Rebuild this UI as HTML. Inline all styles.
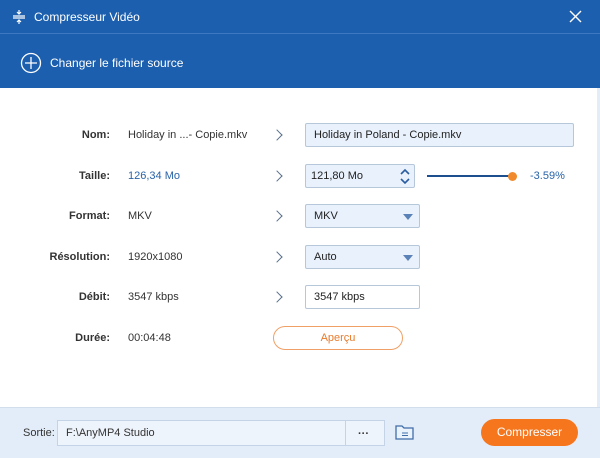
<!DOCTYPE html><html><head><style>
body{margin:0;width:600px;height:457px;overflow:hidden;font-family:"Liberation Sans",sans-serif;font-size:11px;color:#333;background:#fff;position:relative}
.a{position:absolute}
.lab{position:absolute;right:490px;font-weight:bold;color:#333;font-size:11px}
.val{position:absolute;left:128px}
.arr{position:absolute;left:273px;width:7px;height:7px;border-top:1.3px solid #5a6f8a;border-right:1.3px solid #5a6f8a;transform:rotate(45deg)}
.inp{position:absolute;left:305px;background:#e8f1fc;border:1px solid #b7c7da;border-radius:2px;box-sizing:border-box;height:24px;line-height:22px;padding-left:8px;color:#222}
.dd{position:absolute;right:6px;top:9px;border-left:5px solid transparent;border-right:5px solid transparent;border-top:6px solid #5b82b8}
</style></head><body>
<div class="a" style="left:0;top:0;width:600px;height:33px;background:#1c5fae"></div>
<div class="a" style="left:0;top:33px;width:600px;height:1px;background:#3d78c0"></div>
<div class="a" style="left:0;top:34px;width:600px;height:54px;background:#1c5fae"></div>
<div class="a" style="left:597px;top:88px;width:3px;height:320px;background:#e3ecf7"></div>
<svg class="a" style="left:12px;top:9px" width="14" height="16"><path d="M1 7h12M1 9h12M7 1v4M5 3l2 2 2-2M7 15v-4M5 13l2-2 2 2" stroke="#fff" stroke-width="1.2" fill="none"/></svg>
<div class="a" style="left:34px;top:10px;color:#fff;font-size:12px">Compresseur Vidéo</div>
<svg class="a" style="left:569px;top:10px" width="13" height="13"><path d="M1 1L12 12M12 1L1 12" stroke="#fff" stroke-width="1.4"/></svg>
<svg class="a" style="left:20px;top:52px" width="22" height="22"><circle cx="11" cy="11" r="9.5" stroke="#fff" stroke-width="1.3" fill="none"/><path d="M11 5v12M5 11h12" stroke="#fff" stroke-width="1.3"/></svg>
<div class="a" style="left:50px;top:56px;color:#fff;font-size:12px">Changer le fichier source</div>

<div class="lab" style="top:129px">Nom:</div><div class="val" style="top:129px">Holiday in ...- Copie.mkv</div><div class="arr" style="top:131px"></div>
<div class="inp" style="top:123px;width:269px">Holiday in Poland - Copie.mkv</div>
<div class="lab" style="top:170px">Taille:</div><div class="val" style="top:170px;color:#2a63a8">126,34 Mo</div><div class="arr" style="top:172px"></div>
<div class="inp" style="top:164px;width:110px;padding-left:5px">121,80 Mo
<svg class="a" style="right:4px;top:3px" width="10" height="17"><path d="M1 6l4-4 4 4M1 11l4 4 4-4" stroke="#2a5da0" stroke-width="1.6" fill="none"/></svg></div>
<div class="a" style="left:427px;top:175px;width:85px;height:2px;background:#1d4f8f"></div>
<div class="a" style="left:508px;top:172px;width:9px;height:9px;border-radius:50%;background:#f08a2c"></div>
<div class="a" style="left:530px;top:170px;color:#2a63a8">-3.59%</div>
<div class="lab" style="top:210px">Format:</div><div class="val" style="top:210px">MKV</div><div class="arr" style="top:212px"></div>
<div class="inp" style="top:204px;width:115px">MKV<div class="dd"></div></div>
<div class="lab" style="top:251px">Résolution:</div><div class="val" style="top:251px">1920x1080</div><div class="arr" style="top:253px"></div>
<div class="inp" style="top:245px;width:115px">Auto<div class="dd"></div></div>
<div class="lab" style="top:291px">Débit:</div><div class="val" style="top:291px">3547 kbps</div><div class="arr" style="top:293px"></div>
<div class="inp" style="top:285px;width:115px;background:#fff">3547 kbps</div>
<div class="lab" style="top:332px">Durée:</div><div class="val" style="top:332px">00:04:48</div>
<div class="a" style="left:273px;top:326px;width:130px;height:24px;box-sizing:border-box;border:1.3px solid #f0a066;border-radius:12px;text-align:center;line-height:22px;color:#e87a2a">Aperçu</div>

<div class="a" style="left:0;top:407px;width:600px;height:50px;background:#e3edf9;border-top:1px solid #d3deec"></div>
<div class="a" style="left:23px;top:427px">Sortie:</div>
<div class="a" style="left:57px;top:420px;width:328px;height:26px;box-sizing:border-box;border:1px solid #c4d3e5;background:#eef4fc"></div>
<div class="a" style="left:345px;top:421px;width:1px;height:24px;background:#c4d3e5"></div>
<div class="a" style="left:66px;top:427px">F:\AnyMP4 Studio</div>
<div class="a" style="left:358px;top:428px;font-weight:bold">···</div>
<svg class="a" style="left:394px;top:423px" width="22" height="18"><path d="M2 3h6l2 2h9v11H2z" stroke="#3f6da8" stroke-width="1.3" fill="#eaf2fc"/><path d="M8 10h6M8 12.5h6" stroke="#3f6da8" stroke-width="1"/></svg>
<div class="a" style="left:481px;top:419px;width:97px;height:27px;border-radius:14px;background:#f6761e;color:#fff;text-align:center;line-height:27px;font-size:12px">Compresser</div>
</body></html>
